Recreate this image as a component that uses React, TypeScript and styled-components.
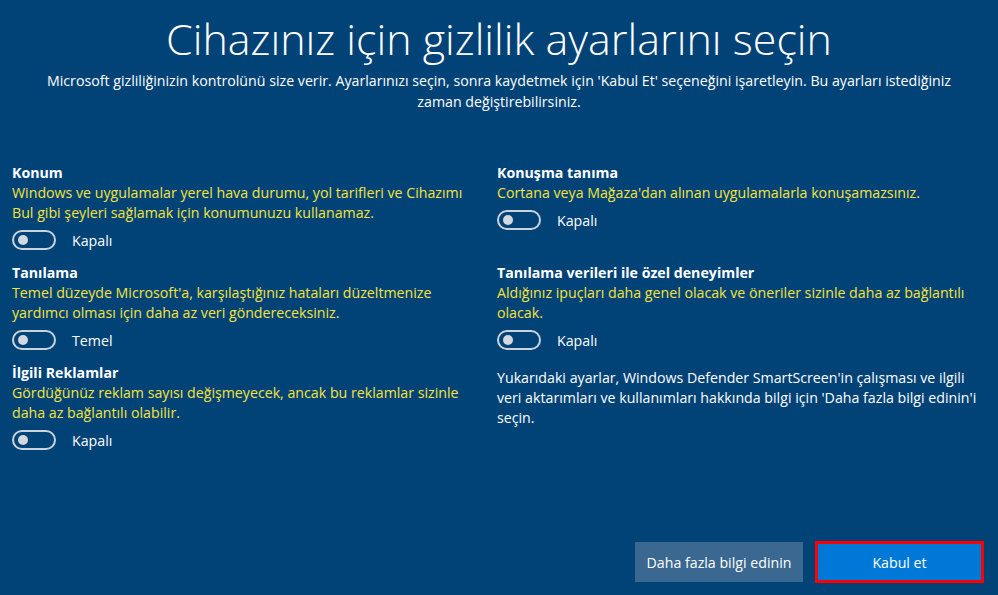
import React from 'react';
import styled, { createGlobalStyle } from 'styled-components';

const GlobalStyle = createGlobalStyle`
  html, body {
    margin: 0;
    padding: 0;
    background: #024377;
  }
  * {
    box-sizing: border-box;
  }
`;

const Page = styled.div`
  width: 998px;
  height: 595px;
  background: #024377;
  color: #ffffff;
  font-family: 'Open Sans', 'Noto Sans', sans-serif;
  display: flex;
  flex-direction: column;
  overflow: hidden;
`;

const Header = styled.header`
  display: flex;
  flex-direction: column;
  align-items: center;
  padding-top: 8px;
`;

const Title = styled.h1`
  margin: 0;
  font-size: 43px;
  font-weight: 300;
  line-height: 62px;
`;

const Subtitle = styled.p`
  margin: 0;
  width: 920px;
  font-size: 14.2px;
  line-height: 21px;
  text-align: center;
`;

const Settings = styled.section`
  display: grid;
  grid-template-columns: 485px 1fr;
  grid-template-rows: 100px 100px auto;
  padding: 51px 8px 0 12px;
  flex: 1;
`;

const Setting = styled.div`
  display: flex;
  flex-direction: column;
  padding-right: 18px;
`;

const Heading = styled.div`
  font-size: 14.2px;
  font-weight: 700;
  line-height: 20px;
`;

const Description = styled.div`
  font-size: 14.2px;
  line-height: 20px;
  color: #f5e33c;
`;

const Note = styled.div`
  font-size: 14.2px;
  line-height: 20px;
  padding-top: 5px;
`;

const ToggleRow = styled.div`
  display: flex;
  align-items: center;
  gap: 16px;
  margin-top: 6px;
  height: 22px;
`;

const Track = styled.span`
  width: 44px;
  height: 20px;
  border: 2px solid #c9d3dc;
  border-radius: 10px;
  display: flex;
  align-items: center;
  padding-left: 4px;
`;

const Knob = styled.span`
  width: 10px;
  height: 10px;
  border-radius: 50%;
  background: #d3d9df;
`;

const ToggleLabel = styled.span`
  font-size: 14.2px;
`;

const Footer = styled.footer`
  display: flex;
  justify-content: flex-end;
  align-items: center;
  gap: 12px;
  padding: 0 14px 12px 0;
`;

const Button = styled.button<{ $primary?: boolean }>`
  height: ${p => (p.$primary ? '42px' : '40px')};
  width: ${p => (p.$primary ? '169px' : '168px')};
  border: ${p => (p.$primary ? '3px solid #ff0000' : 'none')};
  background: ${p => (p.$primary ? '#0078d7' : '#3a6890')};
  color: #ffffff;
  font-family: 'Open Sans', 'Noto Sans', sans-serif;
  font-size: 14.2px;
  padding: 0;
  cursor: pointer;
`;

const Toggle: React.FC<{ label: string }> = ({ label }) => (
  <ToggleRow>
    <Track>
      <Knob />
    </Track>
    <ToggleLabel>{label}</ToggleLabel>
  </ToggleRow>
);

export default function App() {
  return (
    <Page>
      <GlobalStyle />
      <Header>
        <Title>Cihazınız için gizlilik ayarlarını seçin</Title>
        <Subtitle>
          Microsoft gizliliğinizin kontrolünü size verir. Ayarlarınızı seçin, sonra kaydetmek için 'Kabul Et'
          seçeneğini işaretleyin. Bu ayarları istediğiniz zaman değiştirebilirsiniz.
        </Subtitle>
      </Header>

      <Settings>
        <Setting>
          <Heading>Konum</Heading>
          <Description>
            Windows ve uygulamalar yerel hava durumu, yol tarifleri ve Cihazımı Bul gibi şeyleri sağlamak için
            konumunuzu kullanamaz.
          </Description>
          <Toggle label="Kapalı" />
        </Setting>
        <Setting>
          <Heading>Konuşma tanıma</Heading>
          <Description>Cortana veya Mağaza'dan alınan uygulamalarla konuşamazsınız.</Description>
          <Toggle label="Kapalı" />
        </Setting>
        <Setting>
          <Heading>Tanılama</Heading>
          <Description>
            Temel düzeyde Microsoft'a, karşılaştığınız hataları düzeltmenize yardımcı olması için daha az veri
            göndereceksiniz.
          </Description>
          <Toggle label="Temel" />
        </Setting>
        <Setting>
          <Heading>Tanılama verileri ile özel deneyimler</Heading>
          <Description>
            Aldığınız ipuçları daha genel olacak ve öneriler sizinle daha az bağlantılı olacak.
          </Description>
          <Toggle label="Kapalı" />
        </Setting>
        <Setting>
          <Heading>İlgili Reklamlar</Heading>
          <Description>
            Gördüğünüz reklam sayısı değişmeyecek, ancak bu reklamlar sizinle daha az bağlantılı olabilir.
          </Description>
          <Toggle label="Kapalı" />
        </Setting>
        <Note>
          Yukarıdaki ayarlar, Windows Defender SmartScreen'in çalışması ve ilgili veri aktarımları ve
          kullanımları hakkında bilgi için 'Daha fazla bilgi edinin'i seçin.
        </Note>
      </Settings>

      <Footer>
        <Button>Daha fazla bilgi edinin</Button>
        <Button $primary>Kabul et</Button>
      </Footer>
    </Page>
  );
}
